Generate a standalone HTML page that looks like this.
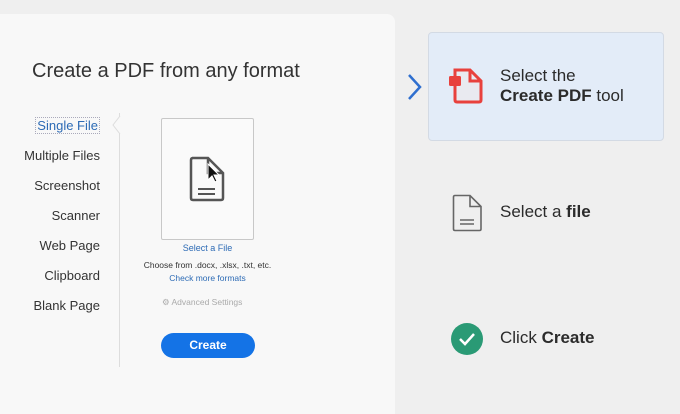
<!DOCTYPE html>
<html><head><style>
body{margin:0;width:680px;height:406px;background:#efefef;position:relative;overflow:hidden;font-family:"Liberation Sans",sans-serif}
.p{position:absolute}
.left{left:0;top:14px;width:395px;height:400px;background:#f8f8f8;border-top-right-radius:8px}
.nav{position:absolute;right:580px;font-size:13px;color:#333;white-space:nowrap;text-align:right}
.r{font-size:17px;color:#2b2b2b;white-space:nowrap}
</style></head><body>
<div class="p left"></div>
<div class="p" style="left:32px;top:60px;font-size:20px;color:#333">Create a PDF from any format</div>
<div class="nav" style="top:117px;color:#2d6bb5;border:1px dotted #aab;padding:0 1px">Single File</div>
<div class="nav" style="top:148px">Multiple Files</div>
<div class="nav" style="top:178px">Screenshot</div>
<div class="nav" style="top:208px">Scanner</div>
<div class="nav" style="top:238px">Web Page</div>
<div class="nav" style="top:268px">Clipboard</div>
<div class="nav" style="top:298px">Blank Page</div>
<div class="p" style="left:119px;top:113px;width:1px;height:254px;background:#ddd"></div>
<svg class="p" style="left:112px;top:116px" width="9" height="18"><path d="M8 0 L1 9 L8 18" fill="#f8f8f8" stroke="#ddd"/></svg>
<div class="p" style="left:161px;top:118px;width:91px;height:120px;border:1px solid #c8c8c8;border-radius:2px;background:#fafafa"></div>
<svg class="p" style="left:189px;top:156px" width="36" height="46" viewBox="0 0 36 46"><path d="M3 2 H19 L34 17 V42 Q34 44 32 44 H4 Q2 44 2 42 V4 Q2 2 4 2Z M19 2 V17 H34" fill="none" stroke="#555" stroke-width="2.5"/><path d="M9 33 H26 M9 38 H26" stroke="#555" stroke-width="2"/><path d="M19 8 L19 24 L23 20 L26 26 L28 25 L25 19 L30 19Z" fill="#111" stroke="#fff" stroke-width="1"/></svg>
<div class="p" style="left:140px;top:243px;width:135px;text-align:center;font-size:9px;color:#2d6bb5">Select a File</div>
<div class="p" style="left:120px;top:260px;width:175px;text-align:center;font-size:8.5px;color:#333">Choose from .docx, .xlsx, .txt, etc.</div>
<div class="p" style="left:140px;top:273px;width:135px;text-align:center;font-size:8.5px;color:#2d6bb5">Check more formats</div>
<div class="p" style="left:162px;top:297px;font-size:8.5px;color:#aaa">⚙ Advanced Settings</div>
<div class="p" style="left:161px;top:333px;width:94px;height:25px;border-radius:13px;background:#1473e6;color:#fff;font-weight:bold;font-size:12px;text-align:center;line-height:25px">Create</div>
<svg class="p" style="left:405px;top:72px" width="18" height="30"><path d="M4 3 L15 15 L4 27" fill="none" stroke="#2f6fcf" stroke-width="2.5"/></svg>
<div class="p" style="left:428px;top:32px;width:236px;height:109px;background:#e3ecf8;border:1px solid #d3dae4;border-radius:4px;box-sizing:border-box"></div>
<svg class="p" style="left:446px;top:66px" width="40" height="40" viewBox="0 0 40 40"><path d="M9 4 H24 L35 15 V34 Q35 36 33 36 H11 Q9 36 9 34Z" fill="#e9eaf0" stroke="#e8413d" stroke-width="3"/><path d="M24 4 V15 H35" fill="none" stroke="#e8413d" stroke-width="3"/><rect x="3" y="10" width="12" height="10" rx="1.5" fill="#e8413d"/></svg>
<div class="p r" style="left:500px;top:66px;line-height:20px">Select the<br><b>Create PDF</b> tool</div>
<svg class="p" style="left:452px;top:194px" width="32" height="38" viewBox="0 0 32 38"><path d="M3 1.5 H18 L29 12.5 V35 Q29 36.5 27.5 36.5 H3 Q1.5 36.5 1.5 35 V3 Q1.5 1.5 3 1.5Z M18 1.5 V12.5 H29" fill="none" stroke="#666" stroke-width="1.6"/><path d="M8 26 H22 M8 30 H22" stroke="#666" stroke-width="1.6"/></svg>
<div class="p r" style="left:500px;top:202px">Select a <b>file</b></div>
<svg class="p" style="left:450px;top:322px" width="34" height="34"><circle cx="17" cy="17" r="16" fill="#2a9a75"/><path d="M10 17 L15 22 L24 12" fill="none" stroke="#fff" stroke-width="2.5"/></svg>
<div class="p r" style="left:500px;top:328px">Click <b>Create</b></div>
</body></html>
